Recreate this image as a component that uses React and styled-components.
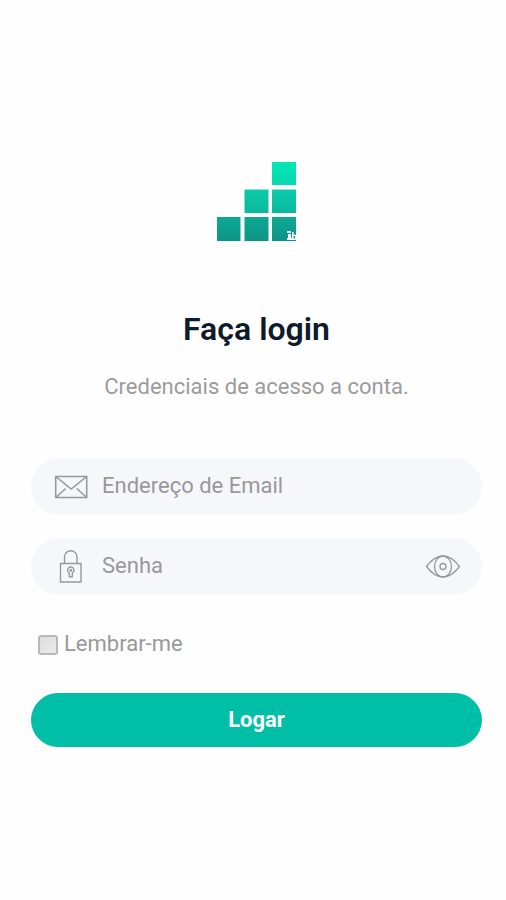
import React, { useState } from 'react';
import styled, { createGlobalStyle } from 'styled-components';

const GlobalStyle = createGlobalStyle`
  * {
    box-sizing: border-box;
    margin: 0;
    padding: 0;
  }
  body, input, button {
    font-family: Roboto, sans-serif;
  }
  body {
    background: #fefefe;
  }
`;
const Container = styled.main`
  min-height: 100vh;
  padding: 8px 24px 0 31px;
  display: flex;
  flex-direction: column;
  align-items: center;
  justify-content: center;
`;
const Logo = styled.svg`
  width: 80px;
  height: 80px;
`;
const Title = styled.h1`
  margin-top: 68px;
  font-size: 32px;
  line-height: 40px;
  font-weight: 600;
  color: #0d1b2a;
`;
const Subtitle = styled.p`
  margin-top: 24px;
  font-size: 22px;
  line-height: 28px;
  color: #9b9b9b;
`;
const Form = styled.form`
  width: 100%;
  margin-top: 57px;
  display: flex;
  flex-direction: column;
`;
const Fields = styled.div`
  display: flex;
  flex-direction: column;
  gap: 23px;
`;
const Field = styled.div`
  height: 57px;
  padding: 0 22px;
  display: flex;
  align-items: center;
  gap: 14px;
  border-radius: 29px;
  background: #f5f7fb;
`;
const Icon = styled.svg`
  flex: none;
  width: 35px;
  height: 35px;
  fill: none;
  stroke: #999;
  stroke-width: ${({ $stroke }) => $stroke || 1.4};
`;
const Input = styled.input`
  flex: 1;
  min-width: 0;
  height: 100%;
  padding-bottom: 3px;
  border: none;
  outline: none;
  background: transparent;
  font-size: 22px;
  color: #555;
  &::placeholder {
    color: #999;
    opacity: 1;
  }
`;
const EyeButton = styled.button`
  display: flex;
  border: none;
  background: transparent;
  cursor: pointer;
`;
const Remember = styled.label`
  margin-top: 35px;
  padding-left: 7px;
  display: flex;
  align-items: center;
  align-self: flex-start;
  gap: 6px;
  font-size: 22px;
  line-height: 28px;
  color: #999;
`;
const Checkbox = styled.input`
  appearance: none;
  width: 20px;
  height: 20px;
  margin-top: 2px;
  border: 2px solid #b9b9b9;
  border-radius: 3px;
  background: linear-gradient(135deg, #dcdcdc, #ececec);
  &:checked {
    background: #00bfa6;
  }
`;
const SubmitButton = styled.button`
  width: 100%;
  height: 54px;
  margin-top: 35px;
  padding-bottom: 2px;
  border: none;
  border-radius: 27px;
  background: #00bfa6;
  color: #fff;
  font-size: 22px;
  font-weight: bold;
  cursor: pointer;
`;

const LogoMark = () => (
  <Logo viewBox="0 0 80 80" role="img" aria-label="Logo">
    <defs>
      <linearGradient id="top" x1="0" y1="0" x2="0" y2="1">
        <stop offset="0" stopColor="#06e6b4" />
        <stop offset="1" stopColor="#08d9ae" />
      </linearGradient>
      <linearGradient id="middle" x1="0" y1="0" x2="0" y2="1">
        <stop offset="0" stopColor="#0bcba9" />
        <stop offset="1" stopColor="#0bb89e" />
      </linearGradient>
      <linearGradient id="bottom" x1="0" y1="0" x2="0" y2="1">
        <stop offset="0" stopColor="#0da994" />
        <stop offset="1" stopColor="#0c9487" />
      </linearGradient>
    </defs>
    <path fill="url(#top)" d="M55 1h24v23H55z" />
    <path fill="url(#middle)" d="M27.5 28.500h24v23.500h-24z" />
    <path fill="url(#middle)" d="M55 28.500h24v23.500H55z" />
    <path fill="url(#bottom)" d="M0 56h23.500v24H0z" />
    <path fill="url(#bottom)" d="M27.500 56h24v24h-24z" />
    <path fill="url(#bottom)" d="M55 56h24v24H55z" />
    <g fill="#fff">
      <path d="M70 70h4v2h-4zM71 73h3v4h1v2h-5v-2h1z" />
      <path fillRule="evenodd" d="M75 71h1.500v2.500h1.500l2 2v2L78.500 79H75zM76.500 75v2.500h1.500V75z" />
    </g>
  </Logo>
);

const MailIcon = () => (
  <Icon viewBox="0 0 35 35" $stroke={1.6} aria-hidden="true">
    <path d="M2.700 7.500h31v21h-31zM2.700 7.500l15.500 12.500L33.700 7.500M2.700 28.500l10-9M33.700 28.500l-10-9" />
  </Icon>
);

const LockIcon = () => (
  <Icon viewBox="0 0 35 35" aria-hidden="true">
    <path d="M7.500 14.500h20.500v18.500H7.500zM11.500 14.500V8a6.250 6.250 0 0 1 12.500 0v6.500" />
    <path d="M16.300 24a3.200 3.200 0 1 1 3 0v3.800h-3z" />
    <circle cx="17.800" cy="21.300" r="0.800" />
  </Icon>
);

const EyeIcon = () => (
  <Icon viewBox="0 0 35 35" $stroke={1.3} aria-hidden="true">
    <path d="M1.500 17.500C6 11.500 11 7 18 7s12 4.500 16.500 10.500C30 23.500 25 28 18 28S6 23.500 1.500 17.500z" />
    <ellipse cx="18" cy="17.500" rx="8.500" ry="10.500" />
    <circle cx="18" cy="17.500" r="3" />
  </Icon>
);

const App = () => {
  const [visible, setVisible] = useState(false);

  return (
    <>
      <GlobalStyle />
      <Container>
        <LogoMark />
        <Title>Faça login</Title>
        <Subtitle>Credenciais de acesso a conta.</Subtitle>
        <Form onSubmit={(e) => e.preventDefault()}>
          <Fields>
            <Field>
              <MailIcon />
              <Input type="email" placeholder="Endereço de Email" aria-label="Endereço de Email" />
            </Field>
            <Field>
              <LockIcon />
              <Input type={visible ? 'text' : 'password'} placeholder="Senha" aria-label="Senha" />
              <EyeButton type="button" aria-label="Mostrar senha" onClick={() => setVisible(!visible)}>
                <EyeIcon />
              </EyeButton>
            </Field>
          </Fields>
          <Remember>
            <Checkbox type="checkbox" />
            Lembrar-me
          </Remember>
          <SubmitButton type="submit">Logar</SubmitButton>
        </Form>
      </Container>
    </>
  );
};

export default App;
